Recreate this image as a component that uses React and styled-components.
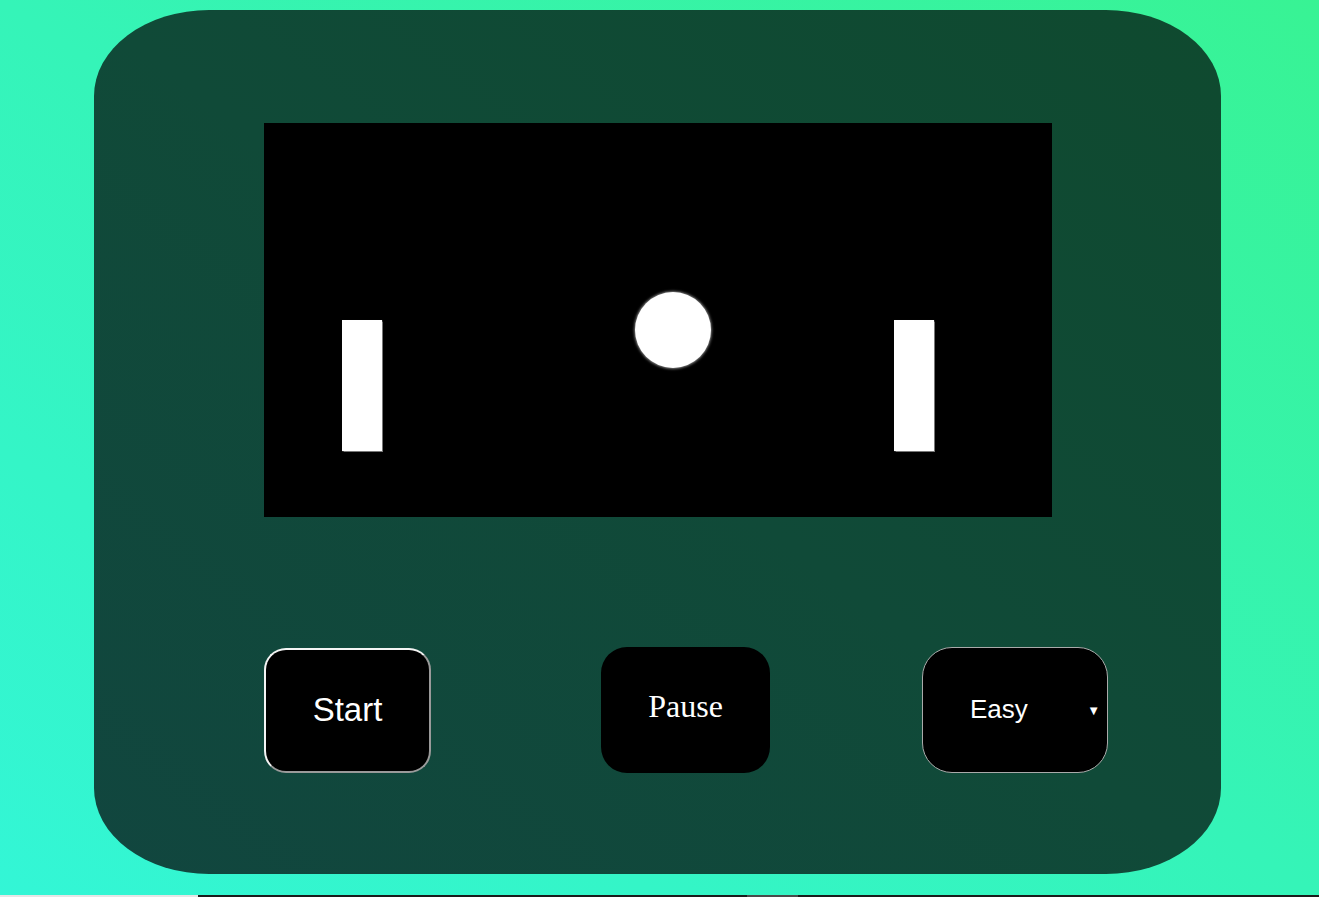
import React from "react";
import styled, { createGlobalStyle } from "styled-components";

const Global = createGlobalStyle`
  html, body { margin: 0; padding: 0; }
  body {
    width: 1319px;
    height: 897px;
    overflow: hidden;
    background: linear-gradient(to top right, #33f6d6 0%, #35f4b8 50%, #38f394 100%);
    font-family: "Liberation Sans", Arial, sans-serif;
  }
`;

const Page = styled.div`
  display: flex;
  flex-direction: column;
  align-items: flex-start;
  padding-top: 10px;
`;

const Card = styled.div`
  box-sizing: border-box;
  width: 1127px;
  height: 864px;
  margin-left: 94px;
  border-radius: 115px / 86px;
  background: linear-gradient(to top right, #11463f 0%, #104a38 50%, #0f4a2f 100%);
  display: flex;
  flex-direction: column;
  padding-top: 113px;
`;

const Board = styled.div`
  position: relative;
  width: 788px;
  height: 394px;
  margin-left: 170px;
  background: #000;
`;

const Paddle = styled.div`
  position: absolute;
  top: 197px;
  left: ${(p) => p.$x}px;
  width: 40px;
  height: 131px;
  background: #fff;
  box-shadow: 0 0 1px 0.5px #777;
`;

const Ball = styled.div`
  position: absolute;
  left: 371px;
  top: 169px;
  width: 76px;
  height: 76px;
  border-radius: 50%;
  background: #fff;
  box-shadow: 0 0 3px 0.5px #aaa;
`;

const Controls = styled.div`
  display: flex;
  align-items: center;
  margin-top: 130px;
  padding-left: 170px;
`;

const StartButton = styled.button`
  box-sizing: border-box;
  width: 167px;
  height: 125px;
  background: #000;
  color: #fff;
  border: 2.5px solid;
  border-color: #f4f4f4 #9a9a9a #9a9a9a #f4f4f4;
  border-radius: 22px;
  font-family: "Liberation Sans", Arial, sans-serif;
  font-size: 33px;
  padding: 0 0 2px;
  margin-top: 1px;
`;

const PauseButton = styled.button`
  box-sizing: border-box;
  width: 169px;
  height: 126px;
  margin-left: 170px;
  background: #000;
  color: #fff;
  border: none;
  border-radius: 26px;
  font-family: "Liberation Serif", "Times New Roman", serif;
  font-size: 32px;
  padding: 0 0 7px;
`;

const Select = styled.div`
  box-sizing: border-box;
  position: relative;
  width: 186px;
  height: 126px;
  margin-left: 152px;
  background: #000;
  color: #fff;
  border: 1px solid #aaa;
  border-radius: 30px;
  display: flex;
  align-items: center;
  padding-left: 47px;
  padding-bottom: 2px;
  font-size: 26px;
`;

const Arrow = styled.span`
  position: absolute;
  right: 7px;
  top: 50%;
  transform: translateY(-50%);
  font-size: 13px;
`;

const Strip = styled.div`
  display: flex;
  width: 1319px;
  height: 2px;
  margin-top: 21px;
`;

const StripPart = styled.div`
  width: ${(p) => p.$w}px;
  flex: ${(p) => (p.$grow ? 1 : "none")};
  background: ${(p) => p.$c};
`;

export default function App() {
  return (
    <>
      <Global />
      <Page>
        <Card>
          <Board>
            <Paddle $x={78} />
            <Ball />
            <Paddle $x={630} />
          </Board>
          <Controls>
            <StartButton>Start</StartButton>
            <PauseButton>Pause</PauseButton>
            <Select>
              Easy
              <Arrow>▼</Arrow>
            </Select>
          </Controls>
        </Card>
        <Strip>
          <StripPart $w={198} $c="#e6e6e6" />
          <StripPart $w={549} $c="#1b1b1b" />
          <StripPart $w={51} $c="#4a4a4a" />
          <StripPart $grow $c="#1b1b1b" />
        </Strip>
      </Page>
    </>
  );
}
